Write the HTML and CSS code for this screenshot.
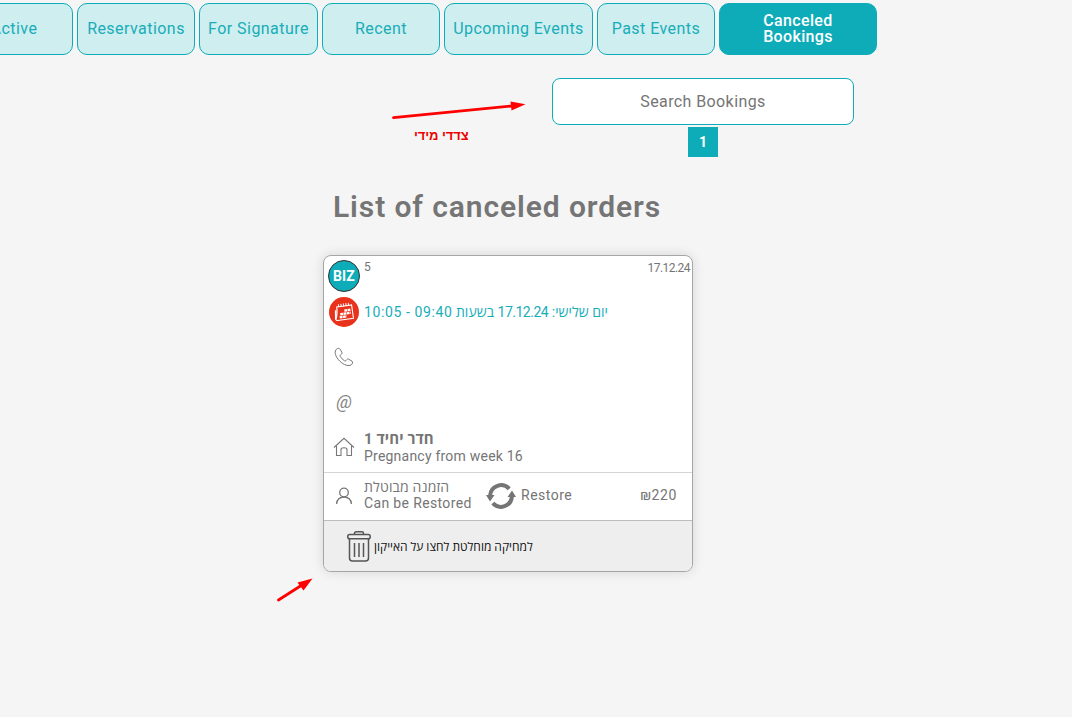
FILE: index.html
```html
<!DOCTYPE html>
<html lang="en">
<head>
<meta charset="utf-8">
<title>Canceled Bookings</title>
<link rel="stylesheet" href="styles.css">
</head>
<body>
<nav class="tabs">
  <a class="tab"><span>Active</span></a>
  <a class="tab"><span>Reservations</span></a>
  <a class="tab tab-sign"><span>For Signature</span></a>
  <a class="tab"><span>Recent</span></a>
  <a class="tab tab-up"><span>Upcoming Events</span></a>
  <a class="tab"><span>Past Events</span></a>
  <a class="tab tab-current"><span>Canceled<br>Bookings</span></a>
</nav>
<section class="search">
  <div class="search-box"><span>Search Bookings</span></div>
  <div class="page-number">1</div>
</section>
<h1 class="title">List of canceled orders</h1>
<article class="card">
  <header class="row row-head">
    <div class="icon"><span class="biz">BIZ</span></div>
    <span class="count">5</span>
    <span class="date">17.12.24</span>
  </header>
  <div class="row row-time">
    <div class="icon">
      <svg width="30" height="30" viewBox="0 0 30 30"><circle cx="15" cy="15" r="15" fill="#e8321b"/><g transform="rotate(-8 15 15)" fill="none" stroke="#fff"><path d="M8.500 9H23.500V22.500H7.500c-1.500 0-2-1-1.200-2.200C8 17 8.500 13 8.500 9Z" stroke-width="1.100"/><path d="M7 12 5.800 21.500" stroke-width="1.600"/><path d="M10.500 6.500v3M13 6.500v3M15.500 6.500v3M18 6.500v3M20.500 6.500v3" stroke-width="1"/><path d="M15.500 13.700h6.500M11 16.700h10.500M10 19.700h7" stroke-width="2.400" stroke-dasharray="2.800 .5"/></g></svg>
    </div>
    <span class="time" dir="rtl">יום שלישי: <span class="day">17.12.24</span> בשעות <span class="hours">09:40 - 10:05</span></span>
  </div>
  <div class="row row-contact">
    <div class="icon"><svg width="20" height="20" viewBox="0 0 20 20" fill="none" stroke="#777"><path d="M3.500 1.500C1.200 2.600.7 5 1.500 7.500c1.500 4.600 6 9.200 10.500 10.600 2.800.9 5.600.5 6.600-2 .3-.8 0-1.500-.6-1.900l-3.300-2c-.7-.4-1.400-.2-1.900.4l-.8 1c-.4.500-1 .5-1.500.2-1.900-1.200-3.200-2.600-4.300-4.500-.3-.5-.2-1 .3-1.400l1-.8c.6-.5.700-1.200.4-1.900l-1.900-3C5.500 1.400 4.500 1 3.500 1.500Z"/></svg></div>
  </div>
  <div class="row row-contact"><div class="icon at">@</div></div>
  <div class="row row-room">
    <div class="icon"><svg width="22" height="20" viewBox="0 0 22 20" fill="none" stroke="#777" stroke-width="1.100"><path d="M1 10.500 11 1.300 21 10.500M3.500 9v9.500h4.500v-6c0-1.200.8-1.800 3-1.800s3 .6 3 1.800v6h4.500V9"/></svg></div>
    <div class="lines"><b class="room" dir="rtl">חדר יחיד 1</b><span class="week">Pregnancy from week 16</span></div>
  </div>
  <div class="row row-status">
    <div class="icon"><svg width="18" height="18" viewBox="0 0 18 18" fill="none" stroke="#777" stroke-width="1.300"><circle cx="9" cy="5.500" r="4.300"/><path d="M1.500 17c.5-4.300 3.500-7 7.500-7s7 2.700 7.500 7"/></svg></div>
    <div class="lines status"><span class="heb" dir="rtl">הזמנה מבוטלת</span><span class="can">Can be Restored</span></div>
    <svg class="restore-icon" width="30" height="28" viewBox="0 0 30 28"><g fill="none" stroke="#757575" stroke-width="4"><path d="M4.100 13.500A11 11 0 0 1 23.200 6.800"/><path d="M25.900 14.500A11 11 0 0 1 6.800 21.200"/></g><path d="M0 13h8.500L4 19.500ZM21.500 15H30L26 8.500Z" fill="#757575"/></svg>
    <span class="restore">Restore</span>
    <span class="price">₪220</span>
  </div>
  <footer class="row row-delete">
    <svg width="24" height="31" viewBox="0 0 24 31" fill="none" stroke="#555" stroke-width="1.500"><path d="M7.500 3.500v-1q0-1.700 1.700-1.700h5.600q1.700 0 1.700 1.700v1"/><rect x=".8" y="3.600" width="22.400" height="4.200" rx="1.800"/><path d="M2.500 8v19q0 3 3 3h13q3 0 3-3V8M7.500 12v14M12 12v14M16.500 12v14"/></svg>
    <span class="delete" dir="rtl">למחיקה מוחלטת לחצו על האייקון</span>
  </footer>
</article>
<div class="note">
  <svg width="1072" height="717" viewBox="0 0 1072 717"><g stroke="#f00" stroke-width="2.800" stroke-linecap="round"><path d="M393.500 117.700 512 106M278.500 600 302 585"/></g><path d="m510.500 101.500 15 2.700-14 6.300ZM297.500 582.500l15-4-9 12Z" fill="#f00"/></svg>
  <span class="note-text" dir="rtl">צדדי מידי</span>
</div>
</body>
</html>
```

FILE: styles.css
```css
* { box-sizing: border-box; }
body { margin: 0; width: 1072px; height: 717px; overflow: hidden; background: #f5f5f5; color: #757575; font-family: Roboto, "Open Sans", sans-serif; font-size: 14px; }
span, b { white-space: nowrap; }
.tabs { display: flex; gap: 4px; margin-left: -45px; padding-top: 3px; }
.tab { display: flex; align-items: center; justify-content: center; flex: none; width: 118px; height: 52px; border: 1px solid #0eacb8; border-radius: 10px; background: #cfeeef; color: #17adb9; font-size: 16px; letter-spacing: .45px; line-height: 16px; text-align: center; }
.tab-sign { width: 119px; }
.tab-up { width: 149px; }
.tab-current { width: 158px; background: #0eacb8; color: #fff; font-weight: 500; letter-spacing: .35px; }
.search { display: flex; flex-direction: column; align-items: center; gap: 2px; width: 302px; margin: 23px 0 0 552px; }
.search-box { display: flex; align-items: center; justify-content: center; width: 100%; height: 47px; border: 1px solid #0eacb8; border-radius: 8px; background: #fff; font-size: 16px; letter-spacing: .4px; }
.page-number { width: 30px; height: 30px; background: #0eacb8; color: #fff; font-weight: 700; line-height: 31px; text-align: center; }
.title { margin: 32px 0 0 333px; font-size: 30px; font-weight: 600; line-height: 36px; letter-spacing: .9px; white-space: nowrap; }
.card { width: 370px; height: 317px; margin: 30px 0 0 323px; border: 1px solid #a6a6a6; border-radius: 8px; background: #fff; box-shadow: 0 0 12px rgba(0,0,0,.13); overflow: hidden; }
.row { display: flex; align-items: center; }
.icon { display: flex; align-items: center; justify-content: center; flex: none; width: 40px; }
.row-head { height: 40px; }
.biz { width: 32px; height: 32px; border: 1px solid #333; border-radius: 50%; background: #0eacb8; color: #fff; font-weight: 700; line-height: 31px; text-align: center; letter-spacing: .2px; }
.count, .date { align-self: flex-start; margin-top: 4px; font-size: 12px; line-height: 15px; }
.date { margin: 5px 2px 0 auto; letter-spacing: -.55px; }
.row-time { height: 32px; color: #17adb9; }
.time { padding-bottom: 1px; letter-spacing: .05px; }
.day { letter-spacing: -.5px; }
.hours { letter-spacing: .6px; }
.row-contact { height: 45px; padding-top: 12px; }
.row-contact + .row-contact { padding-top: 11px; }
.at { color: #858585; font-size: 18px; font-style: italic; }
.row-room { height: 54px; padding-top: 6px; }
.row-room .icon { padding-bottom: 2px; }
.lines { display: flex; flex-direction: column; align-items: flex-start; line-height: 17px; }
.room { font-size: 15px; letter-spacing: .1px; }
.week { letter-spacing: .22px; }
.row-status { height: 48px; padding-bottom: 2px; border-top: 1px solid #d5d5d5; }
.status { width: 122px; padding-bottom: 2px; line-height: 16px; }
.heb { letter-spacing: .15px; }
.can { letter-spacing: .36px; }
.restore { margin-left: 5px; padding-bottom: 2px; letter-spacing: .5px; }
.price { margin: 0 15px 0 auto; padding-bottom: 2px; letter-spacing: .6px; }
.row-delete { height: 52px; padding-left: 23px; gap: 3px; padding-bottom: 1px; border-top: 1px solid #bdbdbd; background: #eee; color: #111; font-size: 12px; }
.note { position: absolute; left: 0; top: 0; width: 1072px; height: 717px; pointer-events: none; }
.note-text { position: absolute; left: 414px; top: 127px; color: #e00; font: bold 13px/18px "Liberation Sans", sans-serif; letter-spacing: -.1px; }
```
